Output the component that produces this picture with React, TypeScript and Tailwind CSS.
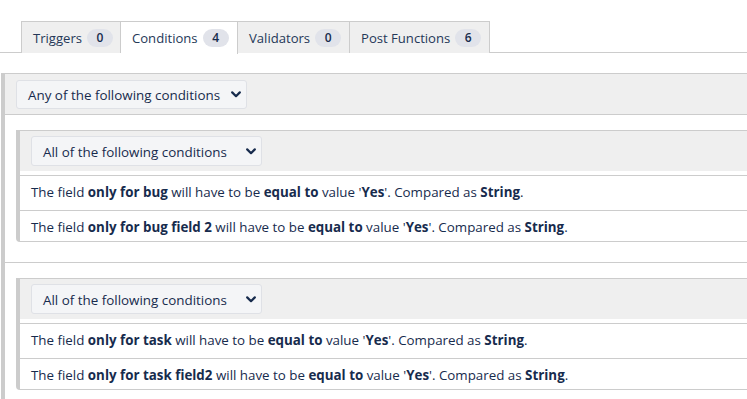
import React from "react";

const font = { fontFamily: '"Segoe UI", "Open Sans", "Noto Sans", sans-serif' };

const tabs = [
  { label: "Triggers", count: 0, w: "w-[100px]" },
  { label: "Conditions", count: 4, w: "w-[117px]", active: true },
  { label: "Validators", count: 0, w: "w-[112px]" },
  { label: "Post Functions", count: 6, w: "w-[140px]" },
];

const Chevron = () => (
  <svg width="10" height="7" viewBox="0 0 10 7" className="shrink-0">
    <path d="M1.2 1.4 L5 5.2 L8.8 1.4" fill="none" stroke="#172b4d" strokeWidth="2.2" strokeLinecap="round" strokeLinejoin="round" />
  </svg>
);

const Select = ({ label, tall }: { label: string; tall?: boolean }) => (
  <div
    className={`flex items-center justify-between w-[231px] ${tall ? "h-[30px]" : "h-[29px]"} pl-[11px] pr-[5px] rounded-[3px] border border-[#dfe1e6] bg-[#f4f5f7] text-[13.4px] text-[#172b4d]`}
  >
    <span className="pt-[3px]">{label}</span>
    <Chevron />
  </div>
);

type Cond = { field: string };

const Row = ({ c, last }: { c: Cond; last?: boolean }) => (
  <div
    className={`${last ? "h-[30px]" : "h-[35px] border-b border-[#ccc]"} pl-[11px] pt-[6px] text-[13.35px] leading-[20px] text-[#172b4d] whitespace-nowrap`}
  >
    The field <b className="font-bold">{c.field}</b> will have to be <b className="font-bold">equal to</b> value '
    <b className="font-bold">Yes</b>'. Compared as <b className="font-bold">String</b>.
  </div>
);

const Group = ({ conds }: { conds: Cond[] }) => (
  <div className="border-l-[4px] border-t border-b border-[#ccc] rounded-bl-[4px]">
    <div className="h-[40px] bg-[#efefef] pl-[11px] flex items-center">
      <Select label="All of the following conditions" tall />
    </div>
    <div className="mt-[4px] border-t border-[#ccc]">
      {conds.map((c, i) => (
        <Row key={c.field} c={c} last={i === conds.length - 1} />
      ))}
    </div>
  </div>
);

export default function App() {
  return (
    <div className="w-[747px] h-[399px] overflow-hidden bg-white" style={font}>
      <div className="w-[800px]">
        <div className="mt-[21px] flex pl-[21px] border-b border-[#ccc] h-[32px]">
          {tabs.map((t) => (
            <div
              key={t.label}
              className={`${t.w} h-[32px] flex items-center pl-[11px] gap-[5px] border-t border-r border-[#ccc] ${
                t.label === "Triggers" ? "border-l" : ""
              } ${t.active ? "bg-white h-[33px] -mb-px self-start" : "bg-[#efefef]"} text-[13.1px] text-[#253858]`}
            >
              <span className="pt-[2px]">{t.label}</span>
              <span className="min-w-[26px] h-[18px] px-[8px] rounded-full bg-[#e1e3ea] text-[12px] font-semibold flex items-center justify-center text-[#172b4d]">
                {t.count}
              </span>
            </div>
          ))}
        </div>

        <div className="mt-[20px] ml-[1px] border-l-[4px] border-t border-[#ccc]">
          <div className="h-[41px] bg-[#efefef] border-b border-[#ccc] pl-[11px] flex items-center">
            <Select label="Any of the following conditions" />
          </div>
          <div className="pl-[11px] pt-[15px] pb-[20px] border-b border-[#ccc]">
            <Group conds={[{ field: "only for bug" }, { field: "only for bug field 2" }]} />
          </div>
          <div className="pl-[11px] pt-[15px] pb-[20px]">
            <Group conds={[{ field: "only for task" }, { field: "only for task field2" }]} />
          </div>
        </div>
      </div>
    </div>
  );
}
